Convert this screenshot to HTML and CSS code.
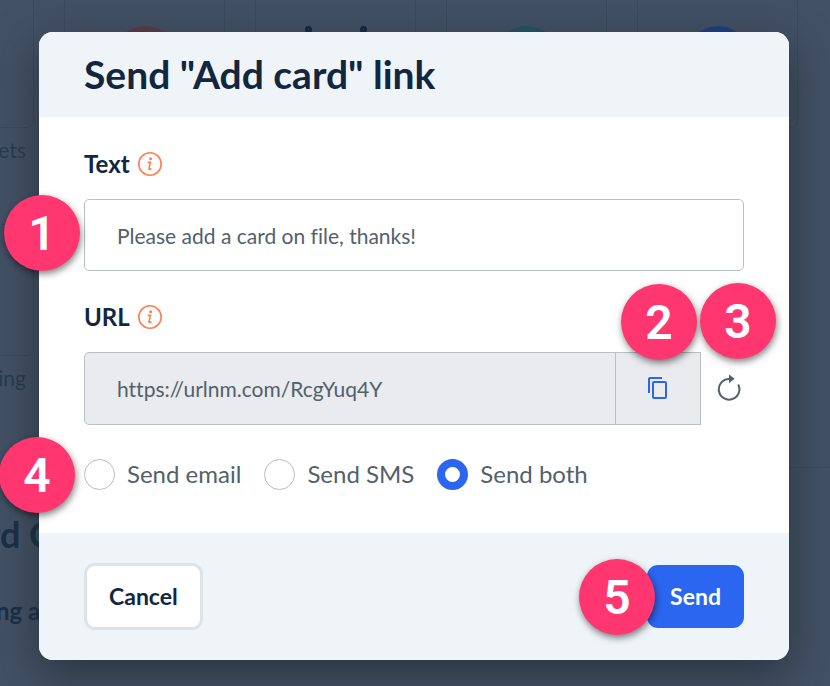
FILE: index.html
```html
<!DOCTYPE html>
<html lang="en">
<head>
<meta charset="utf-8">
<meta name="viewport" content="width=device-width, initial-scale=1">
<title>Send "Add card" link</title>
<link rel="stylesheet" href="styles.css">
</head>
<body>
<div class="page" aria-hidden="true">
  <div class="tiles">
    <div class="tile-cell"><div class="tile"></div><p class="tile-label">ets</p></div>
    <div class="tile-cell"><div class="tile"><i class="disc disc-red"></i></div></div>
    <div class="tile-cell"><div class="tile"><i class="pin"></i><i class="pin"></i></div></div>
    <div class="tile-cell"><div class="tile"><i class="disc disc-teal"></i></div></div>
    <div class="tile-cell"><div class="tile"><i class="disc disc-blue"></i></div></div>
    <div class="tile-cell"><div class="tile"></div><p class="tile-label">ing</p></div>
  </div>
  <hr class="rule">
  <p class="page-title">rd C</p>
  <p class="page-text">ng a</p>
</div>

<div class="overlay">
  <form class="modal" role="dialog" aria-labelledby="title">
    <header class="modal-header">
      <h1 class="title" id="title">Send "Add card" link</h1>
    </header>

    <div class="modal-body">
      <div class="field">
        <div class="field-head">
          <label for="text">Text</label>
          <svg class="info" viewBox="0 0 24 24" aria-hidden="true"><circle cx="12" cy="12" r="11.2"/><circle class="dot" cx="12.6" cy="6.8" r="1.5"/><path d="M9.6 10.4h2.9l-1.5 6q-.2 1.3.8 1l1.6-.9"/></svg>
        </div>
        <div class="anchor">
          <input class="input" id="text" type="text" value="Please add a card on file, thanks!">
          <span class="badge badge-1">1</span>
        </div>
      </div>

      <div class="field">
        <div class="field-head">
          <label for="url">URL</label>
          <svg class="info" viewBox="0 0 24 24" aria-hidden="true"><circle cx="12" cy="12" r="11.2"/><circle class="dot" cx="12.6" cy="6.8" r="1.5"/><path d="M9.6 10.4h2.9l-1.5 6q-.2 1.3.8 1l1.6-.9"/></svg>
        </div>
        <div class="url-row">
          <input class="input input-url" id="url" type="text" value="https://urlnm.com/RcgYuq4Y" readonly>
          <button class="copy" type="button" aria-label="Copy">
            <svg viewBox="0 0 20 22" aria-hidden="true"><path d="M1 16V2a1 1 0 0 1 1-1h12"/><rect x="5" y="5" width="13" height="16" rx="1"/></svg>
          </button>
          <button class="refresh" type="button" aria-label="Refresh">
            <svg viewBox="0 0 24 27" aria-hidden="true"><path d="M13 5H12A10.3 10.3 0 1 0 21.2 10.5"/><path class="head" d="M12 .4 17.6 4.7 12 9.2Z"/></svg>
          </button>
          <span class="badge badge-2">2</span>
          <span class="badge badge-3">3</span>
        </div>
      </div>

      <div class="choices">
        <label class="choice"><input type="radio" name="channel">Send email</label>
        <label class="choice"><input type="radio" name="channel">Send SMS</label>
        <label class="choice"><input type="radio" name="channel" checked>Send both</label>
        <span class="badge badge-4">4</span>
      </div>
    </div>

    <footer class="modal-footer">
      <button class="button cancel" type="button">Cancel</button>
      <div class="anchor">
        <button class="button send" type="submit">Send</button>
        <span class="badge badge-5">5</span>
      </div>
    </footer>
  </form>
</div>
</body>
</html>
```
FILE: styles.css
```css
* {
  box-sizing: border-box;
}

body {
  margin: 0;
  min-height: 100vh;
  display: grid;
  overflow: hidden;
  background: #435165;
  color: #12263f;
  font-family: Lato, "Liberation Sans", sans-serif;
  font-variant-ligatures: no-common-ligatures;
}

.page,
.overlay {
  grid-area: 1 / 1;
  min-width: 0;
}

.page {
  color: #273c50;
}

p {
  margin: 0;
}

.tiles {
  display: grid;
  grid-template-columns: repeat(5, 161px);
  column-gap: 30px;
  margin: -4px 0 0 -127px;
}

.tile {
  display: flex;
  justify-content: center;
  height: 132px;
  padding-top: 29px;
  border: 1px solid #3a4a5d;
  border-radius: 6px;
}

.tile-cell {
  height: 228px;
}

.tile-label {
  padding: 8px;
  text-align: right;
  font-size: 21px;
  line-height: 28px;
}

.disc {
  width: 66px;
  height: 66px;
  border-radius: 50%;
}

.disc-red {
  background: #5e3a49;
}

.disc-teal {
  background: #235564;
}

.disc-blue {
  background: #1e3f85;
}

.pin {
  width: 7px;
  height: 7px;
  margin: 0 24px;
  border: 3px solid #14253f;
  border-radius: 50%;
}

.rule {
  margin: 15px 0 44px;
  border: 0;
  border-top: 1px solid #3a4a5d;
}

.page-title,
.page-text {
  color: #1a2f48;
  font-weight: 700;
}

.page-title {
  text-indent: -13px;
  font-size: 36px;
  line-height: 44px;
}

.page-text {
  margin-top: 40px;
  text-indent: -4px;
  font-size: 24px;
  line-height: 30px;
}

.overlay {
  z-index: 1;
  padding: 32px 41px 26px 39px;
}

.modal {
  border-radius: 14px;
  background: #fff;
  box-shadow: 0 14px 44px rgba(28, 40, 46, 0.7);
}

.modal-header {
  padding: 18px 45px 19px;
  border-radius: 14px 14px 0 0;
  background: #eff4f9;
}

.title {
  margin: 0;
  font-size: 39px;
  line-height: 48px;
  font-weight: 700;
}

.modal-body {
  display: grid;
  gap: 31px;
  padding: 32px 45px 41px;
}

.field-head {
  display: flex;
  align-items: center;
  gap: 8px;
  height: 30px;
  margin-bottom: 20px;
  font-size: 24px;
  line-height: 30px;
  font-weight: 700;
}

.info {
  width: 24px;
  height: 24px;
  fill: none;
  stroke: #ff7f50;
  stroke-width: 1.6;
}

.info .dot {
  fill: #ff7f50;
  stroke: none;
}

.anchor,
.url-row,
.choices {
  position: relative;
}

.input {
  display: block;
  width: 100%;
  min-width: 0;
  height: 72px;
  padding: 0 32px;
  border: 1px solid #b9bfc4;
  border-radius: 5px;
  background: #fff;
  color: #52616c;
  font-family: Lato, "Liberation Sans", sans-serif;
  font-size: 21px;
  font-variant-ligatures: no-common-ligatures;
}

.url-row {
  display: flex;
}

.input-url {
  flex: 1;
  height: 73px;
  border-radius: 5px 0 0 5px;
  background: #e9ebef;
}

.copy {
  display: grid;
  place-items: center;
  width: 86px;
  margin-left: -1px;
  padding: 0 0 1px;
  border: 1px solid #b9bfc4;
  background: #e9ebef;
}

.copy svg {
  width: 20px;
  height: 22px;
  fill: none;
  stroke: #2b66f0;
  stroke-width: 2;
}

.refresh {
  display: grid;
  place-items: center end;
  width: 43px;
  padding: 0 3px 2px 0;
  border: 0;
  background: none;
}

.refresh svg {
  width: 24px;
  height: 27px;
  fill: none;
  stroke: #52616c;
  stroke-width: 2;
}

.refresh .head {
  fill: #52616c;
  stroke: none;
}

.choices {
  display: flex;
  gap: 23px;
}

.choice {
  display: flex;
  align-items: center;
  gap: 12px;
  color: #52616c;
  font-size: 24px;
  line-height: 36px;
  white-space: nowrap;
}

.choice input {
  appearance: none;
  width: 31px;
  height: 31px;
  margin: 0;
  border: 1px solid #babdc0;
  border-radius: 50%;
  background: #fff;
}

.choice input:checked {
  border: 8px solid #2b66f0;
}

.modal-footer {
  display: flex;
  align-items: center;
  justify-content: space-between;
  padding: 30px 45px;
  border-radius: 0 0 14px 14px;
  background: #eff4f9;
}

.button {
  display: block;
  padding: 0 22px;
  border: 3px solid #dee3e8;
  border-radius: 11px;
  background: #fff;
  color: #12263f;
  font: 700 23px/61px Lato, "Liberation Sans", sans-serif;
}

.send {
  padding: 0 23px;
  border: 0;
  background: #2b66f0;
  color: #fff;
  line-height: 63px;
}

.badge {
  position: absolute;
  display: grid;
  place-items: center;
  width: 76px;
  height: 76px;
  border-radius: 50%;
  background: #ff3670;
  box-shadow: 1px 3px 7px rgba(0, 0, 0, 0.5);
  color: #fff;
  font: 600 48px Roboto, "Liberation Sans", sans-serif;
}

.badge-1 {
  top: -4px;
  left: -80px;
}

.badge-2 {
  top: -68px;
  right: 47px;
}

.badge-3 {
  top: -69px;
  right: -32px;
}

.badge-4 {
  top: -19px;
  left: -85px;
}

.badge-5 {
  top: -6px;
  right: 89px;
}
```
